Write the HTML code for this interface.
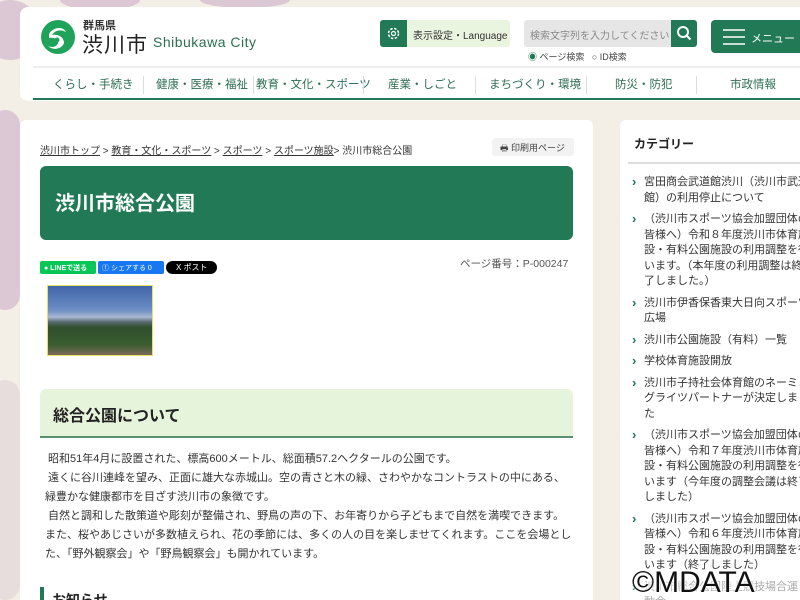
<!DOCTYPE html>
<html><head><meta charset="utf-8"><style>
*{margin:0;padding:0;box-sizing:border-box}
html{width:800px;height:600px;overflow:hidden}
body{width:800px;height:600px;overflow:hidden;background:#f3efe6;font-family:"Liberation Sans","Noto Sans CJK JP",sans-serif;color:#333;position:relative}
.flor{position:absolute;border-radius:50%;background:#c9a8c4;opacity:.55}
.hdr{position:absolute;left:20px;top:7px;width:800px;height:94px;background:#fff;border-radius:8px 0 0 8px}
.logo{position:absolute;left:40px;top:19px}
.ken{position:absolute;left:83px;top:17px;font-size:11px;font-weight:bold;color:#333}
.city{position:absolute;left:82px;top:29px;font-size:21px;color:#222;letter-spacing:1px}
.en{position:absolute;left:153px;top:34px;font-size:14px;color:#2e6e55;letter-spacing:.5px}
.set{position:absolute;left:380px;top:20px;width:130px;height:27px;background:#eaf5e0;border-radius:3px;font-size:10px;color:#333}
.set .ic{position:absolute;left:0;top:0;width:27px;height:27px;background:#217a55;border-radius:3px 0 0 3px}
.srch{position:absolute;left:524px;top:20px;width:147px;height:27px;background:#e6e6e6;border-radius:3px 0 0 3px;font-size:10px;color:#888;padding:7px 6px;white-space:nowrap;overflow:hidden}
.sbtn{position:absolute;left:671px;top:20px;width:26px;height:27px;background:#217a55;border-radius:0 3px 3px 0}
.radio{position:absolute;left:528px;top:50px;font-size:9px;color:#444}
.menu{position:absolute;left:711px;top:20px;width:100px;height:33px;background:#217a55;border-radius:4px;color:#fff;font-size:11px}
.nav{position:absolute;left:33px;top:66px;width:767px;height:34px;border-top:2px solid #eee;border-bottom:2px solid #217a55}
.nav span{position:absolute;top:8px;font-size:11.5px;color:#2e6e55}
.nav i{position:absolute;top:8px;width:1px;height:18px;background:#ddd}
.main{position:absolute;left:20px;top:120px;width:573px;height:490px;background:#fff;border-radius:6px}
.bc{position:absolute;left:40px;top:142px;font-size:10px;color:#333}
.print{position:absolute;left:492px;top:138px;width:82px;height:18px;background:#f2f2f2;border-radius:3px;font-size:9px;color:#444;padding:3px 0 0 8px}
.title{position:absolute;left:40px;top:166px;width:533px;height:74px;background:#217a55;border-radius:6px;color:#fff;font-size:20px;font-weight:bold;padding:21px 0 0 15px}
.sec{position:absolute;left:40px;top:389px;width:533px;height:49px;background:#e7f4dc;border-radius:6px 6px 0 0;border-bottom:2px solid #5a8f6f;font-size:16px;font-weight:bold;color:#222;padding:13px 0 0 13px}
.txt{position:absolute;left:45px;top:450px;width:535px;font-size:11px;line-height:19px;color:#333;white-space:nowrap}
.side{position:absolute;left:620px;top:120px;width:190px;height:490px;background:#fff;border-radius:6px}
.side h3{position:absolute;left:14px;top:15px;font-size:12px;color:#222;font-weight:bold}
.sline{position:absolute;left:628px;top:162px;width:172px;height:2px;background:#ddd}
.side ul{position:absolute;left:10px;top:55px;list-style:none;width:175px;font-size:11px;line-height:15.5px;color:#333;white-space:nowrap;overflow:hidden}
.side li{padding-left:14px;position:relative;margin-bottom:6px}
.side li:before{content:"›";position:absolute;left:2px;top:-1px;font-weight:bold;color:#217a55;font-size:13px}
</style></head><body>
<div class="flor" style="left:-20px;top:0;width:60px;height:60px"></div>
<div class="flor" style="left:-10px;top:110px;width:30px;height:200px;border-radius:15px"></div>
<div class="flor" style="left:60px;top:-10px;width:80px;height:20px"></div>
<div class="flor" style="left:200px;top:-8px;width:90px;height:16px"></div>
<div class="flor" style="left:-10px;top:380px;width:30px;height:220px;border-radius:15px;opacity:.25"></div>
<div class="hdr"></div>
<svg class="logo" width="36" height="36" viewBox="0 0 36 36"><circle cx="18" cy="18" r="17" fill="#1fa35b"/><path d="M9 15c4-7 14-8 17-2-5-3-11-2-14 3 6-1 12 2 12 8-2 6-11 8-16 3 4 2 9 1 10-3 1-4-5-6-9-5z" fill="#fff"/><circle cx="17" cy="21" r="2.5" fill="#1fa35b"/></svg>
<div class="ken">群馬県</div>
<div class="city">渋川市</div>
<div class="en">Shibukawa City</div>
<div class="set"><div class="ic"><svg width="27" height="27" viewBox="0 0 27 27"><circle cx="13.5" cy="13.5" r="5" fill="none" stroke="#fff" stroke-width="1.5" stroke-dasharray="2.5 1.5"/><circle cx="13.5" cy="13.5" r="2" fill="none" stroke="#fff" stroke-width="1.2"/></svg></div><span style="position:absolute;left:33px;top:7px">表示設定・Language</span></div>
<div class="srch">検索文字列を入力してください</div>
<div class="sbtn"><svg width="26" height="27" viewBox="0 0 26 27"><circle cx="12" cy="12" r="5" fill="none" stroke="#fff" stroke-width="2"/><path d="M15.5 15.5l4 4" stroke="#fff" stroke-width="2"/></svg></div>
<div class="radio"><span style="color:#217a55">◉</span> ページ検索 &nbsp; ○ ID検索</div>
<div class="menu"><svg style="position:absolute;left:12px;top:9px" width="22" height="16"><path d="M0 1h22M0 8h22M0 15h22" stroke="#fff" stroke-width="1.6"/></svg><span style="position:absolute;left:40px;top:10px">メニュー</span></div>
<div class="nav">
<span style="left:20px">くらし・手続き</span><i style="left:110px"></i>
<span style="left:123px">健康・医療・福祉</span><i style="left:220px"></i>
<span style="left:223px">教育・文化・スポーツ</span><i style="left:330px"></i>
<span style="left:355px">産業・しごと</span><i style="left:442px"></i>
<span style="left:456px">まちづくり・環境</span><i style="left:553px"></i>
<span style="left:582px">防災・防犯</span><i style="left:663px"></i>
<span style="left:697px">市政情報</span>
</div>
<div class="main"></div>
<div class="bc"><u>渋川市トップ</u> &gt; <u>教育・文化・スポーツ</u> &gt; <u>スポーツ</u> &gt; <u>スポーツ施設</u>&gt; 渋川市総合公園</div>
<div class="print">🖶 印刷用ページ</div>
<div class="title">渋川市総合公園</div>
<div style="position:absolute;left:40px;top:261px;width:56px;height:13px;background:#06c755;border-radius:2px;color:#fff;font-size:7px;font-weight:bold;padding:2px 0 0 4px">● LINEで送る</div>
<div style="position:absolute;left:98px;top:261px;width:66px;height:13px;background:#1877f2;border-radius:2px;color:#fff;font-size:7px;padding:2px 0 0 4px">ⓕ シェアする 0</div>
<div style="position:absolute;left:166px;top:261px;width:51px;height:13px;background:#000;border-radius:7px;color:#fff;font-size:8px;padding:1px 0 0 10px">X ポスト</div>
<div style="position:absolute;left:460px;top:256px;font-size:10.5px;color:#555">ページ番号：P-000247</div>
<div style="position:absolute;left:47px;top:285px;width:106px;height:71px;border:1px solid #e8e060;background:linear-gradient(#3f64a8 0%,#6d8ec6 35%,#a9b8d2 45%,#5a6a72 52%,#2e4f2c 60%,#3b5d30 85%,#7a6a5a 100%)"></div>
<div class="sec">総合公園について</div>
<div class="txt">&nbsp;昭和51年4月に設置された、標高600メートル、総面積57.2ヘクタールの公園です。<br>&nbsp;遠くに谷川連峰を望み、正面に雄大な赤城山。空の青さと木の緑、さわやかなコントラストの中にある、<br>緑豊かな健康都市を目ざす渋川市の象徴です。<br>&nbsp;自然と調和した散策道や彫刻が整備され、野鳥の声の下、お年寄りから子どもまで自然を満喫できます。<br>また、桜やあじさいが多数植えられ、花の季節には、多くの人の目を楽しませてくれます。ここを会場とし<br>た、「野外観察会」や「野鳥観察会」も開かれています。</div>
<div style="position:absolute;left:40px;top:587px;width:4px;height:20px;background:#217a55"></div>
<div style="position:absolute;left:52px;top:590px;font-size:14px;font-weight:bold;color:#222">お知らせ</div>
<div class="side"><h3>カテゴリー</h3>
<ul>
<li>宮田商会武道館渋川（渋川市武道<br>館）の利用停止について</li>
<li>（渋川市スポーツ協会加盟団体の<br>皆様へ）令和８年度渋川市体育施<br>設・有料公園施設の利用調整を行<br>います。（本年度の利用調整は終<br>了しました。）</li>
<li>渋川市伊香保香東大日向スポーツ<br>広場</li>
<li>渋川市公園施設（有料）一覧</li>
<li>学校体育施設開放</li>
<li>渋川市子持社会体育館のネーミン<br>グライツパートナーが決定しまし<br>た</li>
<li>（渋川市スポーツ協会加盟団体の<br>皆様へ）令和７年度渋川市体育施<br>設・有料公園施設の利用調整を行<br>います（今年度の調整会議は終了<br>しました）</li>
<li>（渋川市スポーツ協会加盟団体の<br>皆様へ）令和６年度渋川市体育施<br>設・有料公園施設の利用調整を行<br>います（終了しました）</li>
<li style="color:#aaa">渋川市総合公園陸上競技場合運<br>動会</li>
</ul></div>
<div class="sline"></div>
<div style="position:absolute;left:632px;top:566px;font-size:30px;color:#111;text-shadow:0 0 3px #fff,0 0 3px #fff">©MDATA</div>
</body></html>
